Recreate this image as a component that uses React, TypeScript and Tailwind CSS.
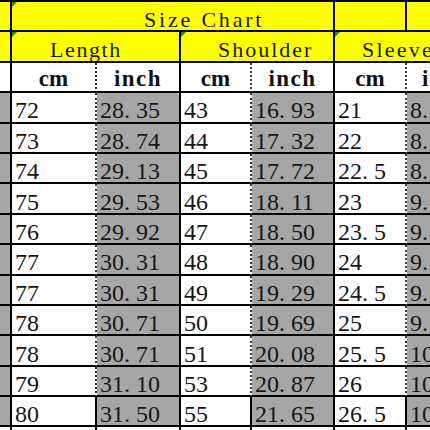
import React from "react";

const rows = [
  ["72", "28.35", "43", "16.93", "21", "8.27"],
  ["73", "28.74", "44", "17.32", "22", "8.66"],
  ["74", "29.13", "45", "17.72", "22.5", "8.86"],
  ["75", "29.53", "46", "18.11", "23", "9.06"],
  ["76", "29.92", "47", "18.50", "23.5", "9.25"],
  ["77", "30.31", "48", "18.90", "24", "9.45"],
  ["77", "30.31", "49", "19.29", "24.5", "9.65"],
  ["78", "30.71", "50", "19.69", "25", "9.84"],
  ["78", "30.71", "51", "20.08", "25.5", "10.04"],
  ["79", "31.10", "53", "20.87", "26", "10.24"],
  ["80", "31.50", "55", "21.65", "26.5", "10.43"],
];

// SimSun style numbers: the dot takes a full half-width cell
function Num({ v }: { v: string }) {
  const [a, b] = v.split(".");
  if (b === undefined) return <span>{a}</span>;
  return (
    <span>
      {a}
      <span className="inline-block w-[12px]">.</span>
      {b}
    </span>
  );
}

function Tri() {
  return (
    <span className="absolute left-0 top-0 h-0 w-0 border-t-[5px] border-r-[5px] border-t-[#1f8f2a] border-r-transparent" />
  );
}

const cell = "relative flex overflow-hidden border-r-2 border-b-2 border-black";
const dotted = "[border-right-style:dotted] border-r-[#3a3a3a]";
const head = "font-['Liberation_Serif',serif] text-[22px] leading-none text-[#1a1a1a] whitespace-nowrap";
const sub = "font-['Liberation_Serif',serif] text-[23px] font-bold leading-none text-[#111] whitespace-nowrap";
const num = "items-center pt-[6px] pl-[3px] font-['Liberation_Serif',serif] text-[24px] leading-none text-[#161616] whitespace-nowrap";

export default function App() {
  return (
    <div className="h-[430px] w-[430px] overflow-hidden bg-white">
      <div className="grid w-[457px] grid-cols-[12px_85px_84px_71px_83px_72px_50px] auto-rows-[30.4px] border-t-2 border-black">
        {/* row 1 */}
        <div className={`${cell} bg-[#ffff00]`} />
        <div className={`${cell} col-span-4 items-center bg-[#ffff00] pt-[7px] pl-[132px] tracking-[2.8px] ${head}`}>
          <Tri />
          Size Chart
        </div>
        <div className={`${cell} bg-[#ffff00]`} />
        <div className={`${cell} bg-[#ffff00]`} />

        {/* row 2 */}
        <div className={`${cell} bg-[#ffff00]`} />
        <div className={`${cell} col-span-2 items-center bg-[#ffff00] pt-[7px] pl-[38px] tracking-[1.6px] ${head}`}>
          <Tri />
          Length
        </div>
        <div className={`${cell} col-span-2 items-center bg-[#ffff00] pt-[7px] pl-[37px] tracking-[2px] ${head}`}>
          <Tri />
          Shoulder
        </div>
        <div className={`${cell} col-span-2 items-center bg-[#ffff00] pt-[7px] pl-[27px] tracking-[2.2px] ${head}`}>
          <Tri />
          Sleeve
        </div>

        {/* row 3 */}
        <div className={`${cell} bg-white`} />
        {["cm", "inch", "cm", "inch", "cm", "inch"].map((t, i) => (
          <div
            key={i}
            className={`${cell} ${i % 2 === 0 ? dotted : "tracking-[1.5px]"} items-center justify-center bg-white pt-[3px] ${sub} ${i === 5 ? "justify-start pl-[15px]" : ""}`}
          >
            {t}
          </div>
        ))}

        {/* data */}
        {rows.map((r, ri) => {
          const last = ri === rows.length - 1;
          return (
            <React.Fragment key={ri}>
              <div className={`${cell} bg-[#a6a6a6]`} />
              {r.map((v, ci) => (
                <div
                  key={ci}
                  className={`${cell} ${ci % 2 === 0 && !last ? dotted : ""} ${ci % 2 === 1 ? "bg-[#a6a6a6]" : "bg-white"} ${num}`}
                >
                  <Num v={v} />
                </div>
              ))}
            </React.Fragment>
          );
        })}

        {/* next row, barely visible */}
        {Array.from({ length: 7 }).map((_, i) => (
          <div key={i} className={`${cell} bg-white`} />
        ))}
      </div>
    </div>
  );
}
